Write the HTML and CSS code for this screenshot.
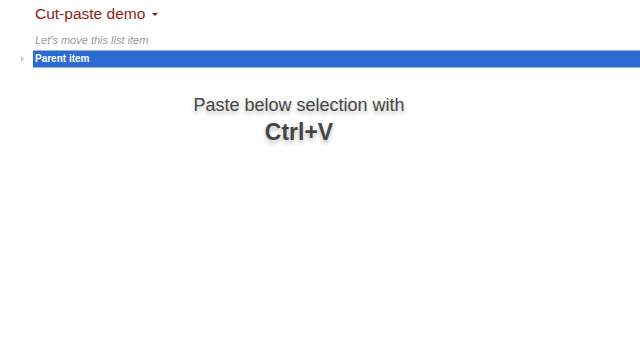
FILE: index.html
```html
<!DOCTYPE html>
<html>
<head>
<meta charset="utf-8">
<link rel="stylesheet" href="styles.css">
</head>
<body>
<div class="page">
  <header class="header">
    <h1 class="title">Cut-paste demo</h1>
    <span class="caret"></span>
  </header>
  <div class="subtitle">Let's move this list item</div>
  <div class="row">
    <span class="expander"></span>
    <div class="item">Parent item</div>
  </div>
  <div class="hint">
    <div class="hint-line">Paste below selection with</div>
    <div class="hint-key">Ctrl+V</div>
  </div>
</div>
</body>
</html>
```
FILE: styles.css
```css
html, body {
  margin: 0;
  padding: 0;
  background: #ffffff;
  width: 640px;
  height: 360px;
  overflow: hidden;
  font-family: "Liberation Sans", Arial, sans-serif;
}
.page {
  display: flex;
  flex-direction: column;
}
.header {
  display: flex;
  align-items: center;
  padding: 4px 0 0 35px;
  height: 20px;
}
.title {
  margin: 0;
  font-size: 15.5px;
  font-weight: normal;
  color: #8e1c17;
  line-height: 20px;
}
.caret {
  margin-left: 7px;
  margin-top: 1px;
  width: 0;
  height: 0;
  border-left: 3px solid transparent;
  border-right: 3px solid transparent;
  border-top: 3px solid #8e1c17;
}
.subtitle {
  margin-top: 9px;
  padding-left: 35px;
  font-size: 11px;
  font-style: italic;
  color: #9a9a9a;
  line-height: 14px;
}
.row {
  display: flex;
  align-items: center;
  margin-top: 3px;
}
.expander {
  width: 0;
  height: 0;
  margin-left: 21px;
  margin-right: 9px;
  border-top: 3px solid transparent;
  border-bottom: 3px solid transparent;
  border-left: 3px solid #c8c8c8;
}
.item {
  flex: 1;
  background: #2c6bcf;
  border-top: 1px solid #8fb4ea;
  border-bottom: 1px solid #8fb4ea;
  color: #ffffff;
  font-weight: bold;
  font-size: 10px;
  line-height: 16px;
  padding-left: 2px;
}
.hint {
  margin-top: 26px;
  display: flex;
  flex-direction: column;
  align-items: center;
  color: #454545;
  text-shadow: 0 3px 4px rgba(0,0,0,0.25);
  margin-right: 42px;
}
.hint-line {
  font-size: 18px;
  line-height: 22px;
}
.hint-key {
  font-size: 23px;
  font-weight: bold;
  line-height: 28px;
  margin-top: 2px;
}
```
